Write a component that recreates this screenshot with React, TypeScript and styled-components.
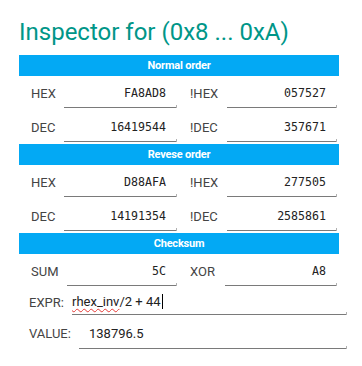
import styled, { createGlobalStyle } from "styled-components";

const GlobalStyle = createGlobalStyle`
  html, body {
    margin: 0;
    padding: 0;
    background: #ffffff;
    font-family: Roboto, "Liberation Sans", sans-serif;
  }
`;

type Pair = { label: string; value: string };

const sections: { title: string; rows: [Pair, Pair][] }[] = [
  {
    title: "Normal order",
    rows: [
      [{ label: "HEX", value: "FA8AD8" }, { label: "!HEX", value: "057527" }],
      [{ label: "DEC", value: "16419544" }, { label: "!DEC", value: "357671" }],
    ],
  },
  {
    title: "Revese order",
    rows: [
      [{ label: "HEX", value: "D88AFA" }, { label: "!HEX", value: "277505" }],
      [{ label: "DEC", value: "14191354" }, { label: "!DEC", value: "2585861" }],
    ],
  },
];

const App = () => {
  return (
    <Page>
      <GlobalStyle />
      <Title>Inspector for (0x8 ... 0xA)</Title>
      <Panel>
        {sections.map((section) => (
          <div key={section.title}>
            <Bar>{section.title}</Bar>
            {section.rows.map((row, i) => (
              <Row key={i}>
                <Label>{row[0].label}</Label>
                <Field>{row[0].value}</Field>
                <Label $right>{row[1].label}</Label>
                <Field>{row[1].value}</Field>
              </Row>
            ))}
          </div>
        ))}
        <Bar>Checksum</Bar>
        <Row $checksum>
          <Label>SUM</Label>
          <Field>5C</Field>
          <Label $right>XOR</Label>
          <Field>A8</Field>
        </Row>
      </Panel>
      <ExprRow>
        <ExprLabel>EXPR:</ExprLabel>
        <ExprField>
          <Typo>rhex_inv</Typo>/2 + 44<Caret />
        </ExprField>
      </ExprRow>
      <ExprRow $value>
        <ExprLabel>VALUE:</ExprLabel>
        <ExprField $value>138796.5</ExprField>
      </ExprRow>
    </Page>
  );
};

const Page = styled.div`
  width: 362px;
  height: 366px;
  padding: 0 0 0 19px;
  box-sizing: border-box;
  overflow: hidden;
`;

const Title = styled.h1`
  margin: 0;
  padding-top: 18px;
  height: 55px;
  box-sizing: border-box;
  font-family: Roboto, "Liberation Sans", sans-serif;
  font-weight: 400;
  font-size: 24px;
  line-height: 28px;
  color: #009688;
  white-space: nowrap;
`;

const Panel = styled.div`
  width: 320px;
`;

const Bar = styled.div`
  height: 21px;
  background: #03a9f4;
  color: #ffffff;
  font-family: Roboto, "Liberation Sans", sans-serif;
  font-weight: 700;
  font-size: 11px;
  line-height: 21px;
  text-align: center;
  letter-spacing: -0.2px;
`;

const Row = styled.div<{ $checksum?: boolean }>`
  display: grid;
  grid-template-columns: ${(p) => (p.$checksum ? "48px 109px 49px 111px" : "45px 112px 51px 109px")};
  align-items: start;
  height: 34px;
  padding-top: 4px;
  box-sizing: border-box;
`;

const Label = styled.div<{ $right?: boolean }>`
  padding-left: ${(p) => (p.$right ? "14px" : "12px")};
  height: 27px;
  line-height: 27px;
  font-size: 13px;
  color: #444444;
`;

const Field = styled.div`
  position: relative;
  height: 27px;
  line-height: 27px;
  padding-right: 10px;
  border-bottom: 1px solid #7a7a7a;
  text-align: right;
  font-family: "DejaVu Sans Mono", "Liberation Mono", monospace;
  font-size: 11.6px;
  color: #222222;

  &::after {
    content: "";
    position: absolute;
    right: -1px;
    bottom: -1px;
    width: 1px;
    height: 3px;
    background: #b0b0b0;
  }
`;

const ExprRow = styled.div<{ $value?: boolean }>`
  display: flex;
  align-items: flex-start;
  height: ${(p) => (p.$value ? "32px" : "30px")};
  padding-top: ${(p) => (p.$value ? "2px" : "1px")};
  box-sizing: border-box;
`;

const ExprLabel = styled.div`
  padding-left: 10px;
  width: 53px;
  box-sizing: border-box;
  height: 27px;
  line-height: 27px;
  font-size: 13px;
  color: #444444;
  flex: none;
`;

const ExprField = styled.div<{ $value?: boolean }>`
  position: relative;
  margin-left: ${(p) => (p.$value ? "7px" : "0")};
  width: ${(p) => (p.$value ? "267px" : "274px")};
  padding-left: ${(p) => (p.$value ? "10px" : "0")};
  box-sizing: border-box;
  height: ${(p) => (p.$value ? "29px" : "26px")};
  line-height: ${(p) => (p.$value ? "27px" : "25px")};
  border-bottom: 1px solid #7a7a7a;
  font-size: 13px;
  color: #222222;
  white-space: nowrap;

  &::after {
    content: "";
    position: absolute;
    right: -1px;
    bottom: -1px;
    width: 1px;
    height: 3px;
    background: #b0b0b0;
  }
`;

const Typo = styled.span`
  text-decoration: underline wavy #e53935;
  text-decoration-thickness: 1px;
  text-underline-offset: 2px;
`;

const Caret = styled.span`
  display: inline-block;
  width: 1px;
  height: 15px;
  margin-left: 1px;
  background: #000000;
  vertical-align: -3px;
`;

export default App;
